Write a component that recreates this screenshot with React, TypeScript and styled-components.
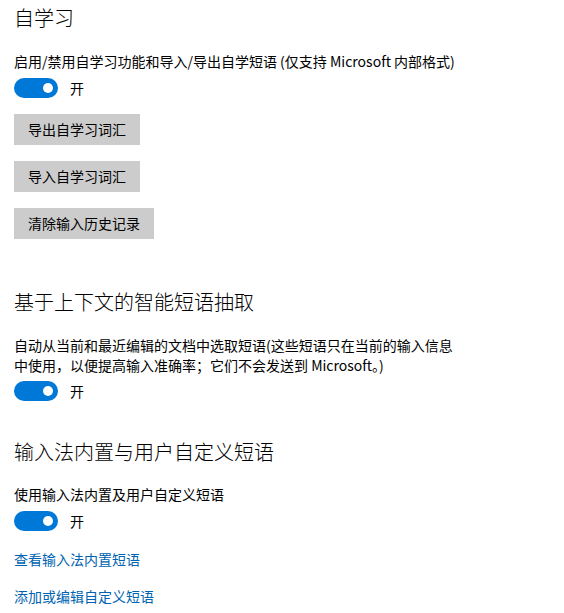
import React from "react";
import styled, { createGlobalStyle } from "styled-components";

const Global = createGlobalStyle`
  html, body { margin: 0; padding: 0; background: #ffffff; }
  body {
    font-family: "Noto Sans CJK SC", "Microsoft YaHei", "Noto Sans", sans-serif;
    color: #000000;
    -webkit-font-smoothing: antialiased;
  }
`;

const Page = styled.div`
  display: flex;
  flex-direction: column;
  padding: 4px 0 0 14px;
`;

const Section = styled.section<{ $top?: number }>`
  display: flex;
  flex-direction: column;
  align-items: flex-start;
  margin-top: ${(p) => p.$top ?? 0}px;
`;

const Title = styled.h2`
  margin: 0;
  font-size: 20px;
  font-weight: 300;
  line-height: 28px;
  height: 28px;
`;

const Desc = styled.p<{ $top: number }>`
  margin: ${(p) => p.$top}px 0 0 0;
  font-size: 14px;
  line-height: 20px;
  max-width: 446px;
`;

const ToggleRow = styled.div<{ $top: number }>`
  display: flex;
  align-items: center;
  gap: 12px;
  margin-top: ${(p) => p.$top}px;
  height: 20px;
  font-size: 14px;
`;

const Track = styled.div`
  box-sizing: border-box;
  width: 44px;
  height: 20px;
  border-radius: 10px;
  background: #0078d7;
  display: flex;
  align-items: center;
  justify-content: flex-end;
  padding: 0 5px;
`;

const Knob = styled.span`
  width: 10px;
  height: 10px;
  border-radius: 50%;
  background: #ffffff;
`;

const Button = styled.button<{ $top: number }>`
  margin-top: ${(p) => p.$top}px;
  height: 31px;
  padding: 0 14px;
  border: none;
  background: #cccccc;
  color: #000000;
  font-family: inherit;
  font-size: 14px;
  line-height: 31px;
`;

const Link = styled.a<{ $top: number }>`
  display: block;
  margin-top: ${(p) => p.$top}px;
  font-size: 14px;
  line-height: 20px;
  color: #0063b1;
  text-decoration: none;
`;

const Toggle = ({ top }: { top: number }) => (
  <ToggleRow $top={top}>
    <Track>
      <Knob />
    </Track>
    <span>开</span>
  </ToggleRow>
);

export default function App() {
  return (
    <>
      <Global />
      <Page>
        <Section>
          <Title>自学习</Title>
          <Desc $top={19}>启用/禁用自学习功能和导入/导出自学短语 (仅支持 Microsoft 内部格式)</Desc>
          <Toggle top={7} />
          <Button $top={16}>导出自学习词汇</Button>
          <Button $top={16}>导入自学习词汇</Button>
          <Button $top={16}>清除输入历史记录</Button>
        </Section>
        <Section $top={49}>
          <Title>基于上下文的智能短语抽取</Title>
          <Desc $top={19}>
            自动从当前和最近编辑的文档中选取短语(这些短语只在当前的输入信息中使用，以便提高输入准确率；它们不会发送到 Microsoft。)
          </Desc>
          <Toggle top={6} />
        </Section>
        <Section $top={37}>
          <Title>输入法内置与用户自定义短语</Title>
          <Desc $top={18}>使用输入法内置及用户自定义短语</Desc>
          <Toggle top={7} />
          <Link $top={18} href="#">查看输入法内置短语</Link>
          <Link $top={17} href="#">添加或编辑自定义短语</Link>
        </Section>
      </Page>
    </>
  );
}
